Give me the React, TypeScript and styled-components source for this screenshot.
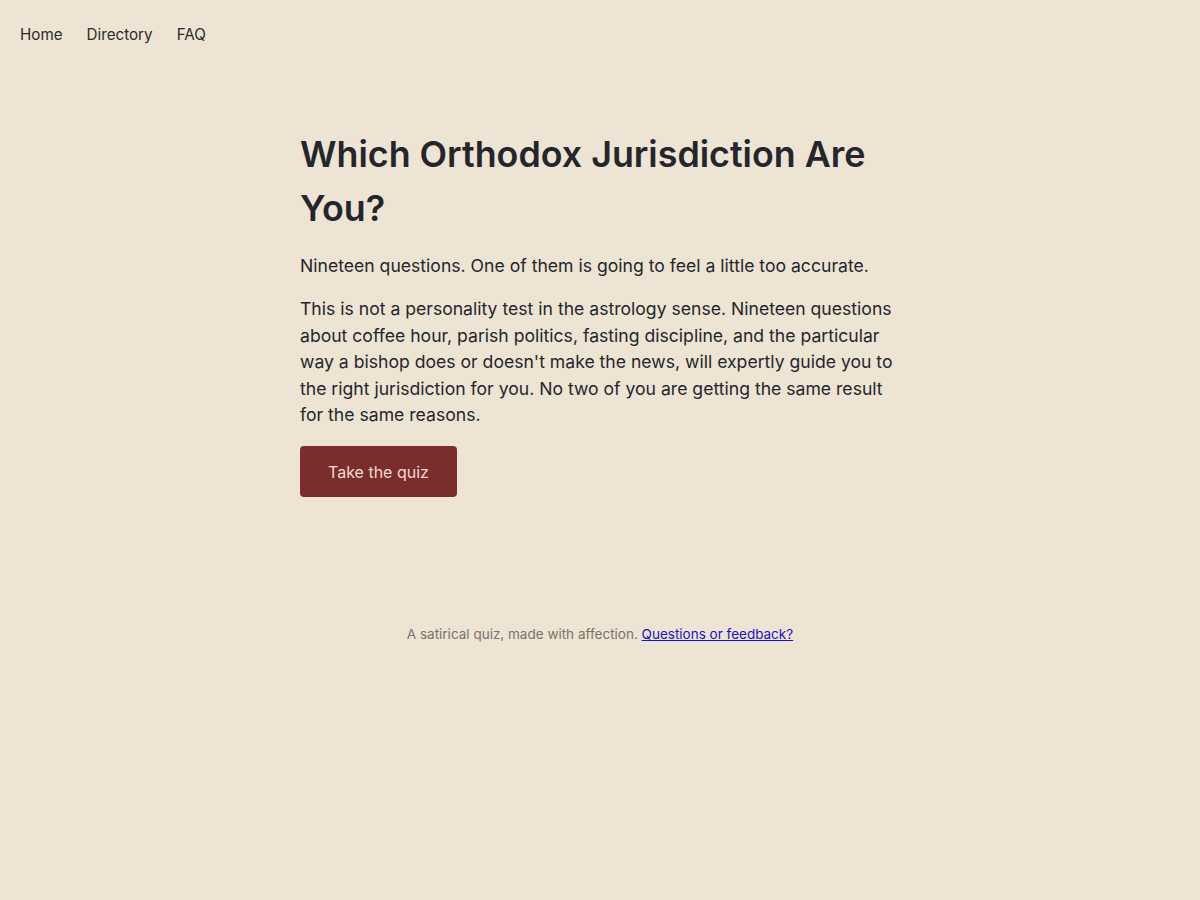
import styled, { createGlobalStyle } from "styled-components";

const GlobalStyle = createGlobalStyle`
  html, body {
    margin: 0;
    padding: 0;
    background-color: #ede4d3;
    color: #25262c;
    font-family: Inter, "Noto Sans", "Liberation Sans", sans-serif;
  }
  body {
    min-height: 900px;
  }
`;

const Page = styled.div`
  display: flex;
  flex-direction: column;
  min-height: 900px;
`;

const Nav = styled.nav`
  display: flex;
  flex-direction: row;
  gap: 24px;
  padding: 23px 20px 21px;
`;

const NavLink = styled.a`
  font-size: 15.2px;
  line-height: 24px;
  color: #2b2b2b;
  text-decoration: none;
`;

const Main = styled.main`
  width: 600px;
  margin: 0 auto;
  padding-top: 59px;
  display: flex;
  flex-direction: column;
  align-items: flex-start;
`;

const Title = styled.h1`
  margin: 0 0 18px;
  font-size: 35.8px;
  line-height: 54px;
  font-weight: 600;
  color: #25262c;
`;

const Lead = styled.p`
  margin: 0 0 17px;
  font-size: 17.6px;
  line-height: 26.4px;
`;

const Body = styled.p`
  margin: 0 0 18px;
  font-size: 17.6px;
  line-height: 26.4px;
`;

const QuizButton = styled.button`
  height: 51px;
  padding: 0 28px;
  border: none;
  border-radius: 4px;
  background-color: #7b2d2e;
  color: #f2dccb;
  font-family: inherit;
  font-size: 16px;
  cursor: pointer;

  &:hover {
    background-color: #6a2425;
  }
`;

const Footer = styled.footer`
  margin-top: 127px;
  text-align: center;
  font-size: 13.5px;
  line-height: 21px;
  color: #77736d;

  a {
    color: #1a12c4;
  }
`;

export default function App() {
  return (
    <Page>
      <GlobalStyle />
      <Nav>
        <NavLink href="#">Home</NavLink>
        <NavLink href="#">Directory</NavLink>
        <NavLink href="#">FAQ</NavLink>
      </Nav>
      <Main>
        <Title>Which Orthodox Jurisdiction Are You?</Title>
        <Lead>Nineteen questions. One of them is going to feel a little too accurate.</Lead>
        <Body>
          This is not a personality test in the astrology sense. Nineteen questions about coffee hour, parish politics,
          fasting discipline, and the particular way a bishop does or doesn't make the news, will expertly guide you to
          the right jurisdiction for you. No two of you are getting the same result for the same reasons.
        </Body>
        <QuizButton>Take the quiz</QuizButton>
      </Main>
      <Footer>
        A satirical quiz, made with affection. <a href="#">Questions or feedback?</a>
      </Footer>
    </Page>
  );
}
